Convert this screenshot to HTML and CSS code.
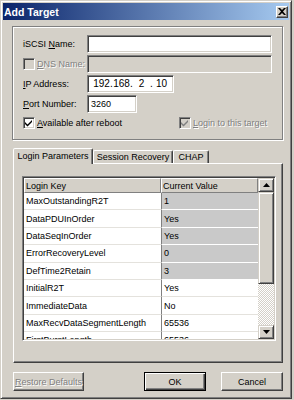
FILE: index.html
```html
<!DOCTYPE html>
<html lang="en">
<head>
    <meta charset="UTF-8">
    <meta name="viewport" content="width=device-width, initial-scale=1.0">
    <title>Add Target</title>
    <link rel="stylesheet" href="styles.css">
</head>
<body>
<div class="window">
    <div class="titlebar">
        <span class="title">Add Target</span>
        <span class="close">
            <svg width="8" height="7" viewBox="0 0 8 7"><path d="M0 0h2l2 2 2-2h2L5 3.5 8 7H6L4 5 2 7H0l3-3.5z" fill="#000"/></svg>
        </span>
    </div>

    <div class="content">
        <!--target details-->
        <div class="group">
            <span class="lbl">iSCSI <u>N</u>ame:</span>
            <div class="field"></div>

            <div class="lbl check-row">
                <span class="check off"></span>
                <span class="dim"><u>D</u>NS Name:</span>
            </div>
            <div class="field off"></div>

            <span class="lbl"><u>I</u>P Address:</span>
            <div class="field ip">
                <span class="seg">192</span><span class="dot">.</span>
                <span class="seg">168</span><span class="dot">.</span>
                <span class="seg">2</span><span class="dot">.</span>
                <span class="seg">10</span>
            </div>

            <span class="lbl"><u>P</u>ort Number:</span>
            <div class="field port">3260</div>

            <div class="options">
                <div class="check-row first">
                    <span class="check">
                        <svg width="8" height="8" viewBox="0 0 8 8"><path d="M0 3l2.5 2.5L7 1v2L2.5 7.5 0 5z" fill="#000"/></svg>
                    </span>
                    <span><u>A</u>vailable after reboot</span>
                </div>
                <div class="check-row">
                    <span class="check off">
                        <svg width="8" height="8" viewBox="0 0 8 8"><path d="M0 3l2.5 2.5L7 1v2L2.5 7.5 0 5z" fill="#808080"/></svg>
                    </span>
                    <span class="dim"><u>L</u>ogin to this target</span>
                </div>
            </div>
        </div>

        <!--tabs-->
        <div class="tabs">
            <div class="tab-strip">
                <span class="tab active">Login Parameters</span>
                <span class="tab session">Session Recovery</span>
                <span class="tab chap">CHAP</span>
            </div>
            <div class="panel">
                <div class="list">
                    <div class="rows">
                        <span class="hd">Login Key</span>
                        <span class="hd">Current Value</span>

                        <span class="key">MaxOutstandingR2T</span><span class="val set">1</span>
                        <span class="key">DataPDUInOrder</span><span class="val set">Yes</span>
                        <span class="key">DataSeqInOrder</span><span class="val set">Yes</span>
                        <span class="key">ErrorRecoveryLevel</span><span class="val set">0</span>
                        <span class="key">DefTime2Retain</span><span class="val set">3</span>
                        <span class="key">InitialR2T</span><span class="val">Yes</span>
                        <span class="key">ImmediateData</span><span class="val">No</span>
                        <span class="key">MaxRecvDataSegmentLength</span><span class="val">65536</span>
                        <span class="key">FirstBurstLength</span><span class="val">65536</span>
                    </div>
                    <div class="scroll">
                        <span class="arrow"><svg width="7" height="4" viewBox="0 0 7 4"><path d="M3.5 0L7 4H0z" fill="#000"/></svg></span>
                        <span class="thumb"></span>
                        <span class="track"></span>
                        <span class="arrow"><svg width="7" height="4" viewBox="0 0 7 4"><path d="M0 0h7L3.5 4z" fill="#000"/></svg></span>
                    </div>
                </div>
            </div>
        </div>

        <div class="buttons">
            <button class="btn restore dim"><u>R</u>estore Defaults</button>
            <button class="btn ok">OK</button>
            <button class="btn">Cancel</button>
        </div>
    </div>
</div>
</body>
</html>
```

FILE: styles.css
```css
*{
    box-sizing: border-box;
    margin: 0;
    padding: 0;
}
body{
    background: #D4D0C8;
    font-family: "Liberation Sans", Arial, sans-serif;
    font-size: 9px;
    color: #000;
}
u{
    text-decoration: underline;
    text-underline-offset: 1px;
}

/*window frame*/
.window{
    width: 292px;
    height: 399px;
    border: 1px solid;
    border-color: #D4D0C8 #404040 #404040 #D4D0C8;
    box-shadow: inset 1px 1px #fff, inset -1px -1px #808080;
    padding: 2px;
}
.titlebar{
    height: 17px;
    display: flex;
    align-items: center;
    justify-content: space-between;
    padding: 0 1px 0 1px;
    background: linear-gradient(90deg, #0A246A, #A6CAF0);
}
.title{
    color: #fff;
    font-weight: bold;
    font-size: 10.5px;
}
.close{
    width: 12px;
    height: 12px;
    display: flex;
    align-items: center;
    justify-content: center;
    background: #D4D0C8;
    border: 1px solid;
    border-color: #fff #404040 #404040 #fff;
    box-shadow: inset -1px -1px #808080;
}
.content{
    padding: 6px 6px 0 9px;
}

/*group box*/
.group{
    display: grid;
    grid-template-columns: 64px 1fr;
    grid-template-rows: repeat(4, 18px) 16px;
    row-gap: 2px;
    align-items: center;
    padding: 8px 10px 8px 10px;
    border: 1px solid #808080;
    box-shadow: inset 1px 1px #fff, 1px 1px #fff;
}
.lbl{
    white-space: nowrap;
}
.field{
    height: 18px;
    line-height: 16px;
    padding-left: 3px;
    background: #fff;
    border: 1px solid;
    border-color: #808080 #fff #fff #808080;
    box-shadow: inset 1px 1px #404040, inset -1px -1px #D4D0C8;
}
.field.off{
    background: #D4D0C8;
}
.ip{
    width: 87px;
    display: flex;
    padding-left: 5px;
    font-size: 10px;
}
.seg{
    width: 17px;
    text-align: center;
}
.dot{
    width: 3px;
    text-align: center;
}
.port{
    width: 50px;
}
.check-row{
    display: flex;
    align-items: center;
    gap: 2px;
    white-space: nowrap;
}
.check{
    width: 12px;
    height: 12px;
    display: flex;
    align-items: center;
    justify-content: center;
    background: #fff;
    border: 1px solid;
    border-color: #808080 #fff #fff #808080;
    box-shadow: inset 1px 1px #404040, inset -1px -1px #D4D0C8;
}
.check.off{
    background: #D4D0C8;
}
.dim{
    color: #808080;
    text-shadow: 1px 1px #fff;
}
.options{
    grid-column: 1 / 3;
    display: flex;
}
.options .first{
    width: 156px;
}

/*tabs*/
.tabs{
    margin: 8px 0 0 1px;
}
.tab-strip{
    display: flex;
    align-items: flex-end;
    height: 15px;
}
.tab{
    height: 13px;
    line-height: 12px;
    text-align: center;
    white-space: nowrap;
    border: 1px solid;
    border-bottom: none;
    border-color: #fff #404040 transparent #fff;
    box-shadow: inset -1px 0 #808080;
    border-radius: 2px 2px 0 0;
}
.tab.active{
    width: 80px;
    height: 16px;
    line-height: 14px;
    margin-bottom: -1px;
    position: relative;
    z-index: 1;
    background: #D4D0C8;
}
.tab.session{
    width: 80px;
}
.tab.chap{
    width: 36px;
}
.panel{
    height: 200px;
    border: 1px solid;
    border-color: #fff #404040 #404040 #fff;
    box-shadow: inset -1px -1px #808080;
    padding: 12px 6px 0 8px;
}

/*list view*/
.list{
    height: 165px;
    display: flex;
    padding: 1px;
    background: #fff;
    border: 1px solid;
    border-color: #808080 #fff #fff #808080;
    box-shadow: inset 1px 1px #404040, inset -1px -1px #D4D0C8;
}
.rows{
    width: 234px;
    overflow: hidden;
    display: grid;
    grid-template-columns: 137px 97px;
    grid-template-rows: 15px;
    grid-auto-rows: 17.4px;
    align-content: start;
    background: #fff;
}
.hd{
    display: flex;
    align-items: center;
    padding-left: 1px;
    background: #D4D0C8;
    border: 1px solid;
    border-color: #fff #808080 #808080 #fff;
}
.key, .val{
    display: flex;
    align-items: center;
    white-space: nowrap;
    border-bottom: 1px solid #E4E2DD;
}
.key{
    padding-left: 2px;
}
.val{
    padding-left: 2px;
    border-left: 1px solid #808080;
}
.val.set{
    background: #C9C9C9;
    border-bottom-color: #fff;
}
.scroll{
    width: 16px;
    display: flex;
    flex-direction: column;
}
.arrow, .thumb{
    display: flex;
    align-items: center;
    justify-content: center;
    background: #D4D0C8;
    border: 1px solid;
    border-color: #D4D0C8 #404040 #404040 #D4D0C8;
    box-shadow: inset 1px 1px #fff, inset -1px -1px #808080;
}
.arrow{
    height: 14px;
}
.thumb{
    height: 92px;
}
.track{
    flex: 1;
    background: repeating-conic-gradient(#D4D0C8 0 25%, #fff 0 50%) 0 0 / 2px 2px;
}

/*bottom buttons*/
.buttons{
    display: flex;
    margin-top: 9px;
    padding: 0 0 0 1px;
}
.btn{
    width: 62px;
    height: 19px;
    font-family: inherit;
    font-size: 9px;
    background: #D4D0C8;
    border: 1px solid;
    border-color: #fff #404040 #404040 #fff;
    box-shadow: inset -1px -1px #808080;
}
.btn.restore{
    width: 71px;
    margin-right: auto;
}
.btn.ok{
    margin-right: 15px;
    border-color: #000;
    box-shadow: inset 1px 1px #fff, inset -1px -1px #404040, inset -2px -2px #808080;
}
```
